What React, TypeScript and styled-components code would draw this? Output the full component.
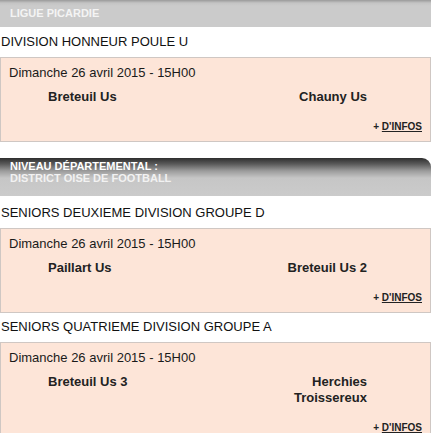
import React from 'react';
import styled, { createGlobalStyle } from 'styled-components';

interface Match {
  date: string;
  home: string;
  away: string;
}

interface Division {
  name: string;
  matches: Match[];
}

const GlobalStyle = createGlobalStyle`
  html, body {
    margin: 0;
    padding: 0;
    background: #fff;
  }
  body {
    font-family: "Liberation Sans", Arial, sans-serif;
    color: #111;
  }
`;

const Page = styled.div`
  width: 431px;
  overflow: hidden;
`;

const LeagueBar = styled.div`
  height: 27px;
  box-sizing: border-box;
  padding: 7px 10px 0;
  background: linear-gradient(to bottom, #9a9a9a 0px, #c4c4c4 3px, #cbcbcb 6px, #cbcbcb 100%);
  color: #f4f4f4;
  font-size: 11px;
  font-weight: bold;
  line-height: 12px;
`;

const DistrictBar = styled.div`
  margin-top: 16px;
  height: 38px;
  box-sizing: border-box;
  padding: 2px 10px 0;
  border-top-right-radius: 9px;
  background: linear-gradient(to bottom, #2e2e2e 0px, #5a5a5a 6px, #9c9c9c 13px, #c6c6c6 20px, #cbcbcb 100%);
  color: #fff;
  font-size: 11px;
  font-weight: bold;
  line-height: 12px;
`;

const BarLine = styled.div<{ $faded?: boolean }>`
  color: ${(p) => (p.$faded ? '#f2f2f2' : '#ffffff')};
`;

const DivisionTitle = styled.div<{ $top: number }>`
  margin: ${(p) => p.$top}px 0 8px 1px;
  font-size: 13px;
  line-height: 15px;
  color: #111;
`;

const MatchBox = styled.div`
  border: 1px solid #cfc7c3;
  background: #fde5d8;
  padding: 7px 8px 8px;
`;

const MatchDate = styled.div`
  font-size: 13px;
  line-height: 16px;
  color: #1a1a1a;
`;

const Teams = styled.div`
  display: flex;
  justify-content: space-between;
  align-items: flex-start;
  margin-top: 8px;
  padding: 0 55px 0 39px;
  font-size: 13px;
  font-weight: bold;
  line-height: 16px;
  color: #222;
`;

const Team = styled.div<{ $away?: boolean }>`
  width: 100px;
  text-align: ${(p) => (p.$away ? 'right' : 'left')};
`;

const MoreInfo = styled.div`
  margin-top: 16px;
  text-align: right;
  font-size: 10px;
  font-weight: bold;
  line-height: 12px;
  color: #222;
`;

const MoreLink = styled.a`
  color: #222;
  text-decoration: underline;
`;

const ligue: Division[] = [
  {
    name: 'DIVISION HONNEUR POULE U',
    matches: [{ date: 'Dimanche 26 avril 2015 - 15H00', home: 'Breteuil Us', away: 'Chauny Us' }],
  },
];

const district: Division[] = [
  {
    name: 'SENIORS DEUXIEME DIVISION GROUPE D',
    matches: [{ date: 'Dimanche 26 avril 2015 - 15H00', home: 'Paillart Us', away: 'Breteuil Us 2' }],
  },
  {
    name: 'SENIORS QUATRIEME DIVISION GROUPE A',
    matches: [
      { date: 'Dimanche 26 avril 2015 - 15H00', home: 'Breteuil Us 3', away: 'Herchies Troissereux' },
    ],
  },
];

const DivisionBlock = ({ division, top }: { division: Division; top: number }) => (
  <>
    <DivisionTitle $top={top}>{division.name}</DivisionTitle>
    {division.matches.map((m, i) => (
      <MatchBox key={i}>
        <MatchDate>{m.date}</MatchDate>
        <Teams>
          <Team>{m.home}</Team>
          <Team $away>{m.away}</Team>
        </Teams>
        <MoreInfo>
          + <MoreLink href="#">D'INFOS</MoreLink>
        </MoreInfo>
      </MatchBox>
    ))}
  </>
);

const App: React.FC = () => (
  <Page>
    <GlobalStyle />
    <LeagueBar>LIGUE PICARDIE</LeagueBar>
    {ligue.map((d) => (
      <DivisionBlock key={d.name} division={d} top={7} />
    ))}
    <DistrictBar>
      <BarLine>NIVEAU DÉPARTEMENTAL :</BarLine>
      <BarLine $faded>DISTRICT OISE DE FOOTBALL</BarLine>
    </DistrictBar>
    {district.map((d, i) => (
      <DivisionBlock key={d.name} division={d} top={i === 0 ? 9 : 6} />
    ))}
  </Page>
);

export default App;
